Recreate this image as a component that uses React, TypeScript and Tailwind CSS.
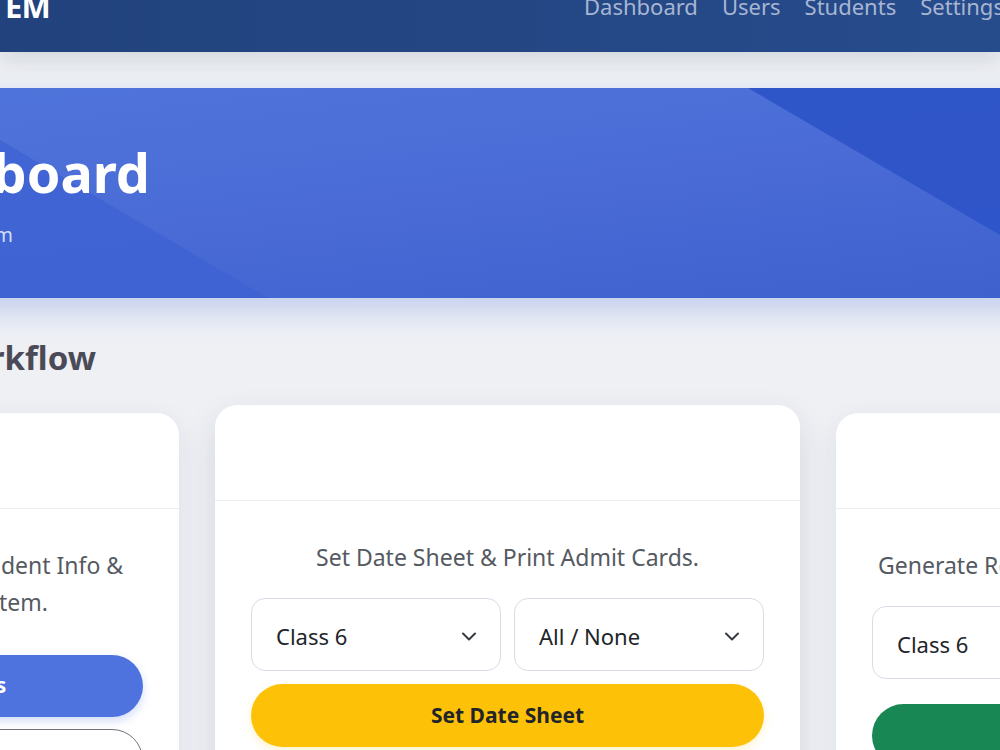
import React from 'react';

const FONT = "font-['Noto_Sans','Open_Sans',sans-serif]";

const Chevron = () => (
  <svg width="16" height="16" viewBox="0 0 16 16" fill="none" className="shrink-0 mt-[3px]">
    <path d="M2 5.5l6 6 6-6" stroke="#343a40" strokeWidth="2" strokeLinecap="round" strokeLinejoin="round" />
  </svg>
);

const Select = ({ label, className = '' }: { label: string; className?: string }) => (
  <div
    className={`h-[73px] rounded-[14px] border border-[#dcdae6] bg-white flex items-center justify-between pl-[24px] pr-[23px] ${className}`}
  >
    <span className="text-[22px] text-[#212529] mt-[3px]">{label}</span>
    <Chevron />
  </div>
);

const Card = ({ raised = false, children }: { raised?: boolean; children: React.ReactNode }) => (
  <div
    className={`rounded-[22px] bg-white overflow-hidden ${raised ? '-translate-y-[8px] shadow-[0_14px_34px_rgba(30,40,80,0.12)]' : 'shadow-[0_8px_28px_rgba(30,40,80,0.08)]'}`}
  >
    <div className="h-[96px] border-b border-[#ececf1]" />
    <div className="px-[36px] pt-[38px] pb-[40px] text-center">{children}</div>
  </div>
);

const App: React.FC = () => {
  return (
    <div className={`w-[1000px] h-[750px] overflow-hidden bg-[#eef0f4] ${FONT}`}>
      {/* top navbar */}
      <nav className="relative z-10 h-[52px] flex items-start bg-gradient-to-r from-[#21427c] to-[#274c8c] shadow-[0_8px_22px_rgba(20,30,60,0.12)]">
        <div className="-mt-[11px] flex items-center h-[34px] whitespace-nowrap">
          <div className="-ml-[150px] w-[200px] text-right text-[31px] font-bold text-white tracking-tight">SYSTEM</div>
          <div className="ml-[534px] flex items-center gap-[24px] text-[22px] text-[#a8b6d2]">
            <span>Dashboard</span>
            <span>Users</span>
            <span>Students</span>
            <span>Settings</span>
          </div>
        </div>
      </nav>

      <main className="-ml-[406px] w-[1827px] pt-[36px]">
        {/* hero banner */}
        <section className="relative h-[210px] overflow-hidden bg-gradient-to-br from-[#5076db] via-[#4a6bd6] to-[#3a5ecb] shadow-[0_12px_28px_rgba(78,115,223,0.28)]">
          <svg className="absolute inset-0 w-full h-full" viewBox="0 0 1827 210" preserveAspectRatio="none">
            <polygon points="0,0 318,0 674,210 0,210" fill="#3d62d3" fillOpacity="0.75" />
            <polygon points="1154,0 1827,0 1827,210 1514,210" fill="#2c53c8" fillOpacity="0.9" />
          </svg>
          <div className="relative pt-[44px] whitespace-nowrap">
            <h1 className="w-[556px] text-right text-[54px] font-bold leading-[80px] text-white">Admin Dashboard</h1>
            <p className="w-[416px] mt-[8px] text-right text-[20px] text-[#d3ddf7]">Welcome to the School Management System</p>
          </div>
        </section>

        <h2 className="mt-[38px] w-[502px] text-right text-[33px] font-bold leading-[44px] text-[#4b4a57] whitespace-nowrap">Exam Workflow</h2>

        {/* workflow cards */}
        <div className="mt-[33px] grid grid-cols-[585px_585px_585px] gap-[36px] items-start">
          <Card>
            <p className="text-[23px] leading-[37px] text-[#555a62] whitespace-nowrap">
              Register Admissions, Update Student Info &amp;
              <br />
              Maintain Records in a System.
            </p>
            <div className="mt-[34px] h-[62px] rounded-full bg-[#4e73df] flex items-center justify-center text-[21px] font-bold text-white whitespace-nowrap shadow-[0_4px_10px_rgba(78,115,223,0.25)]">
              View and Edit Students
            </div>
            <div className="mt-[12px] h-[62px] rounded-full border border-[#6c717c] flex items-center justify-center text-[21px] font-bold text-[#555]">
              View Records
            </div>
          </Card>

          <Card raised>
            <p className="text-[23px] leading-[37px] text-[#555a62] whitespace-nowrap">Set Date Sheet &amp; Print Admit Cards.</p>
            <div className="mt-[22px] grid grid-cols-2 gap-[13px]">
              <Select label="Class 6" />
              <Select label="All / None" />
            </div>
            <div className="mt-[13px] h-[63px] rounded-full bg-[#fdc107] flex items-center justify-center text-[21px] font-bold text-[#212529] shadow-[0_4px_10px_rgba(253,193,7,0.2)]">
              Set Date Sheet
            </div>
          </Card>

          <Card>
            <p className="text-[23px] leading-[37px] text-[#555a62] text-left pl-[6px] whitespace-nowrap">Generate Results &amp; Report Cards.</p>
            <Select label="Class 6" className="mt-[22px]" />
            <div className="mt-[25px] h-[63px] rounded-full bg-[#198754] flex items-center justify-center text-[21px] font-bold text-white">
              Generate Results
            </div>
          </Card>
        </div>
      </main>
    </div>
  );
};

export default App;
